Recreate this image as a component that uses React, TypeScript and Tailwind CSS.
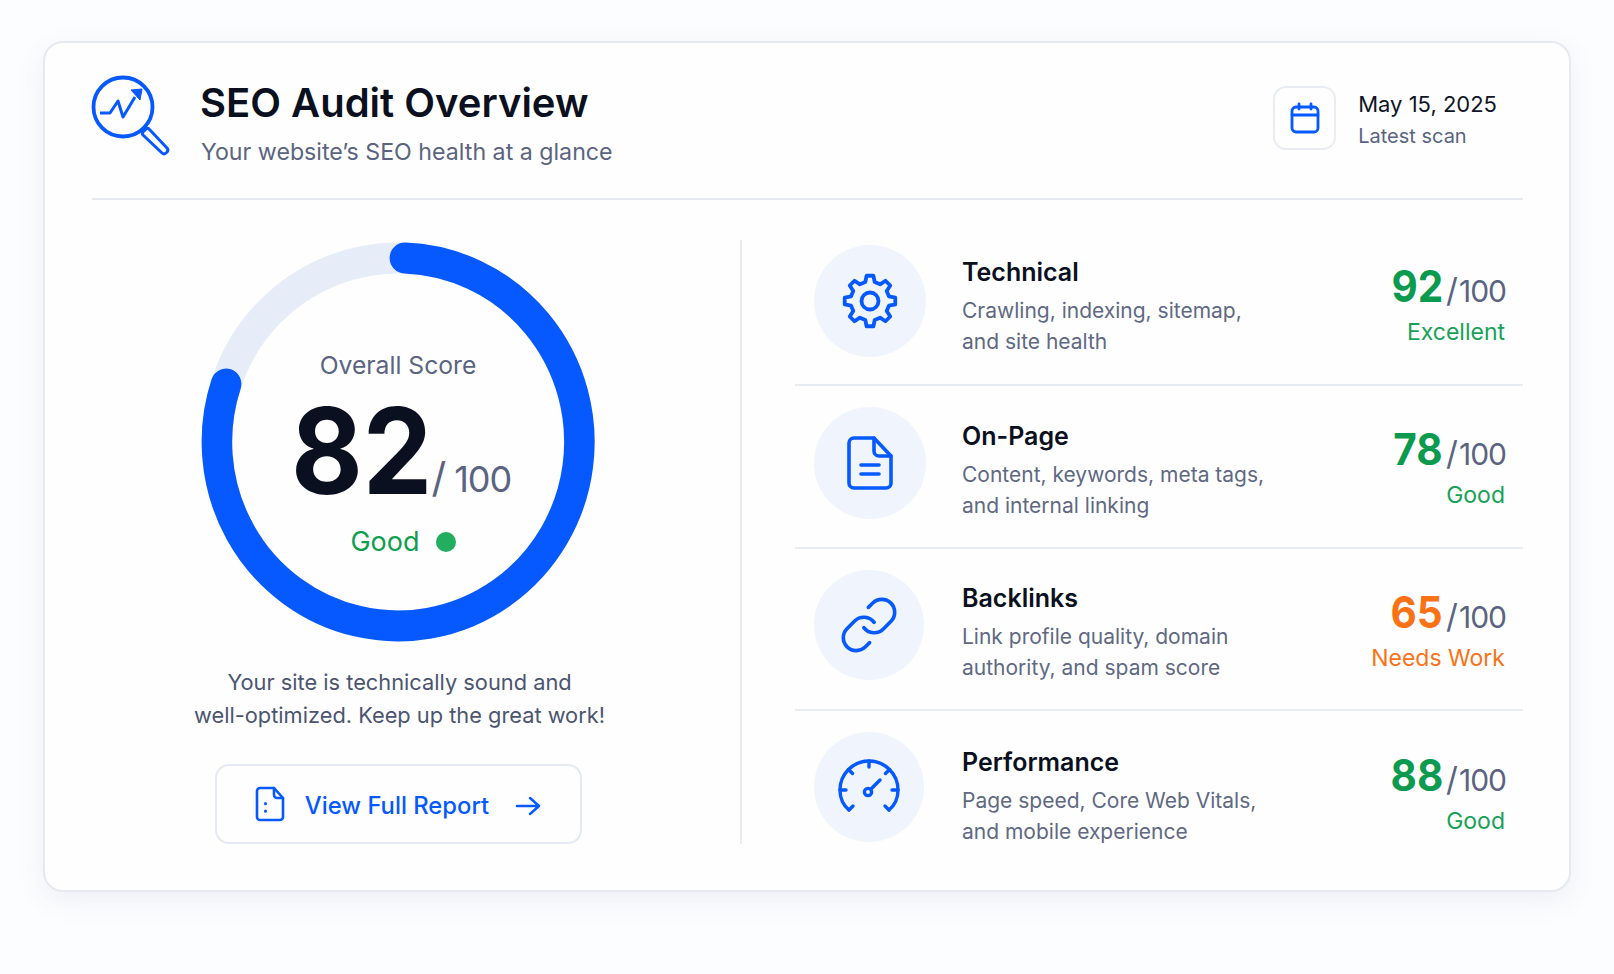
import type { ReactNode } from "react";

const BLUE = "#0559ff";

function gearPath() {
  // 8 teeth around (32,32)
  const teeth = 8;
  const pts: string[] = [];
  for (let i = 0; i < teeth; i++) {
    const a = (i / teeth) * Math.PI * 2 - Math.PI / 2;
    const step = Math.PI / teeth;
    const p = (r: number, t: number) =>
      `${(32 + r * Math.cos(t)).toFixed(2)} ${(32 + r * Math.sin(t)).toFixed(2)}`;
    pts.push(p(19.5, a - step * 0.62), p(25.5, a - step * 0.34), p(25.5, a + step * 0.34), p(19.5, a + step * 0.62));
  }
  return "M" + pts.join("L") + "Z";
}

function GearIcon() {
  return (
    <svg width="64" height="64" viewBox="0 0 64 64" fill="none" stroke={BLUE} strokeWidth="3.8" strokeLinejoin="round">
      <path d={gearPath()} />
      <circle cx="32" cy="32" r="8.5" />
    </svg>
  );
}

function DocIcon() {
  return (
    <svg width="48" height="57" viewBox="0 0 48 57" fill="none" stroke={BLUE} strokeWidth="3.6" strokeLinecap="round" strokeLinejoin="round">
      <path d="M8 3h20l17 18v27a5 5 0 0 1-5 5H8a5 5 0 0 1-5-5V8a5 5 0 0 1 5-5Z" />
      <path d="M28 3v13a5 5 0 0 0 5 5h12" />
      <path d="M15 30h18M15 39h18" />
    </svg>
  );
}

function LinkIcon() {
  return (
    <svg width="62" height="62" viewBox="0 0 24 24" fill="none" stroke={BLUE} strokeWidth="1.4" strokeLinecap="round" strokeLinejoin="round">
      <path d="M10 13a5 5 0 0 0 7.54.54l3-3a5 5 0 0 0-7.07-7.07l-1.72 1.71" />
      <path d="M14 11a5 5 0 0 0-7.54-.54l-3 3a5 5 0 0 0 7.07 7.07l1.71-1.71" />
    </svg>
  );
}

function GaugeIcon() {
  return (
    <svg width="64" height="56" viewBox="0 0 64 56" fill="none" stroke={BLUE} strokeWidth="3.4" strokeLinecap="round" strokeLinejoin="round">
      <path d="M12 51C6 46 3 38 3 31a29 29 0 0 1 58 0c0 7-3 15-9 20" />
      <path d="M12 51l4-4M52 51l-4-4" />
      <path d="M32 2v6M11.5 10.5l4 4M52.500 10.500l-4 4M3 31h6M61 31h-6" />
      <circle cx="31" cy="33" r="3.6" />
      <path d="M34 30l9-9" />
    </svg>
  );
}

function CalendarIcon() {
  return (
    <svg width="30" height="32" viewBox="0 0 30 32" fill="none" stroke={BLUE} strokeWidth="2.8" strokeLinecap="round" strokeLinejoin="round">
      <rect x="2" y="5" width="26" height="25" rx="4" />
      <path d="M2 13h26M9 2v5M21 2v5" />
    </svg>
  );
}

function ReportIcon() {
  return (
    <svg width="30" height="36" viewBox="0 0 30 36" fill="none" stroke={BLUE} strokeWidth="2.6" strokeLinecap="round" strokeLinejoin="round">
      <path d="M5 2h14l9 10v19a3 3 0 0 1-3 3H5a3 3 0 0 1-3-3V5a3 3 0 0 1 3-3Z" />
      <path d="M19 2v7a3 3 0 0 0 3 3h6" />
      <path d="M10.500 17.500v.2M10.500 25v.2" strokeWidth="3" />
    </svg>
  );
}

function ArrowIcon() {
  return (
    <svg width="26" height="22" viewBox="0 0 26 22" fill="none" stroke={BLUE} strokeWidth="2.5" strokeLinecap="round" strokeLinejoin="round">
      <path d="M2 11h22M15 3l9 8-9 8" />
    </svg>
  );
}

function Logo() {
  return (
    <svg width="80" height="82" viewBox="0 0 80 82" fill="none" stroke={BLUE} className="shrink-0">
      <circle cx="32" cy="32" r="29.500" strokeWidth="3.8" />
      <path d="M9 38h10l8-12 5 16 12-20" strokeWidth="3" strokeLinejoin="round" />
      <path d="M40 15l11-1-2 11Z" fill={BLUE} strokeWidth="1" />
      <path d="M52 57l3-3a2 2 0 0 1 3 0l18 19a3 3 0 0 1 0 4l-1 1a3 3 0 0 1-4 0L52 60a2 2 0 0 1 0-3Z" strokeWidth="3" strokeLinejoin="round" />
    </svg>
  );
}

function Ring() {
  return (
    <svg width="394" height="400" viewBox="0 0 400 400" preserveAspectRatio="none" fill="none" className="block">
      <circle cx="200" cy="200" r="184" stroke="#e6edf9" strokeWidth="31" />
      <path d="M207 16A184 184 0 1 1 25.500 142" stroke={BLUE} strokeWidth="31" strokeLinecap="round" />
    </svg>
  );
}

type Row = {
  icon: ReactNode;
  title: string;
  lines: string[];
  score: number;
  label: string;
  tone: string;
  labelTone: string;
  textPad: string;
  scorePad: string;
  small?: boolean;
};

const rows: Row[] = [
  { icon: <GearIcon />, title: "Technical", lines: ["Crawling, indexing, sitemap,", "and site health"], score: 92, label: "Excellent", tone: "text-[#0c9a4e]", labelTone: "text-[#17a257]", textPad: "pt-[10px]", scorePad: "pt-[14px]" },
  { icon: <DocIcon />, title: "On-Page", lines: ["Content, keywords, meta tags,", "and internal linking"], score: 78, label: "Good", tone: "text-[#0c9a4e]", labelTone: "text-[#17a257]", textPad: "pt-[12px]", scorePad: "pt-[15px]" },
  { icon: <LinkIcon />, title: "Backlinks", lines: ["Link profile quality, domain", "authority, and spam score"], score: 65, label: "Needs Work", tone: "text-[#f97316]", labelTone: "text-[#f97316]", textPad: "pt-[11px]", scorePad: "pt-[15px]", small: true },
  { icon: <GaugeIcon />, title: "Performance", lines: ["Page speed, Core Web Vitals,", "and mobile experience"], score: 88, label: "Good", tone: "text-[#0c9a4e]", labelTone: "text-[#17a257]", textPad: "pt-[13px]", scorePad: "pt-[16px]", small: true },
];

export default function App() {
  return (
    <div className="min-h-screen bg-[#fcfdfe] pt-[41px] pl-[43px] font-['Inter',sans-serif]">
      <div className="h-[851px] w-[1528px] rounded-[20px] border-2 border-[#e6e9f0] bg-[#fefefe] pr-[46px] pl-[47px] shadow-[0_8px_28px_rgba(60,80,130,0.08)]">
        {/* header */}
        <div className="flex h-[157px] border-b-2 border-[#e6eaf0]">
          <div className="mt-[32px] ml-[-1px]">
            <Logo />
          </div>
          <div className="ml-[29px] mt-[36px]">
            <h1 className="text-[40px] leading-[48px] font-semibold text-[#0b1020]">SEO Audit Overview</h1>
            <p className="mt-[9px] ml-[1px] text-[23.200px] leading-[32px] text-[#5a6480]">Your website’s SEO health at a glance</p>
          </div>
          <div className="ml-auto mt-[43px] mr-[26px] flex">
            <div className="flex h-[64px] w-[63px] items-center justify-center rounded-[13px] border-2 border-[#e9edf3]">
              <CalendarIcon />
            </div>
            <div className="ml-[22px] pt-[2px]">
              <div className="text-[22px] leading-[32px] font-normal text-[#0f1525]">May 15, 2025</div>
              <div className="mt-[1px] text-[20px] leading-[30px] text-[#5a6480]">Latest scan</div>
            </div>
          </div>
        </div>

        {/* body */}
        <div className="flex">
          {/* left */}
          <div className="flex w-[612px] flex-col items-center pt-[42px]">
            <div className="relative">
              <Ring />
              <div className="absolute inset-0 flex flex-col items-center">
                <div className="mt-[105px] text-[24.700px] leading-[36px] text-[#5a6480]">Overall Score</div>
                <div className="mt-[18px] ml-[6px] flex items-baseline">
                  <span className="mr-[-12px] inline-block origin-left scale-x-[0.92] text-[120px] leading-[100px] font-bold text-[#0b1020]">82</span>
                  <span className="ml-[-1px] -translate-y-[2px] text-[41px] leading-[40px] text-[#5a6480]">/</span>
                  <span className="ml-[8px] -translate-y-[2px] text-[36px] leading-[40px] tracking-[-1px] text-[#5a6480]">100</span>
                </div>
                <div className="mt-[23px] ml-[10px] flex items-center gap-[16px]">
                  <span className="text-[27px] leading-[36px] text-[#0f9d50]">Good</span>
                  <span className="size-[20px] rounded-full bg-[#22ad5f]" />
                </div>
              </div>
            </div>
            <p className="mt-[24px] ml-[3px] text-center text-[21.800px] leading-[33px] text-[#4b5570]">
              Your site is technically sound and
              <br />
              well-optimized. Keep up the great work!
            </p>
            <button type="button" className="mt-[32px] flex h-[80px] w-[367px] items-center justify-center rounded-[14px] border-2 border-[#e5e9f1]">
              <ReportIcon />
              <span className="mt-[4px] ml-[20px] text-[23.800px] font-medium text-[#0559ff]">View Full Report</span>
              <span className="mt-[4px] ml-[26px]">
                <ArrowIcon />
              </span>
            </button>
          </div>

          <div className="ml-[36px] mt-[40px] h-[604px] w-[2px] bg-[#e8ebf1]" />

          {/* right */}
          <div className="ml-[53px] flex-1 pt-[24px]">
            {rows.map((r, i) => (
              <div key={r.title} className={`flex h-[162.300px] pt-[21px] pl-[19px] ${i < rows.length - 1 ? "border-b-2 border-[#e8ecf3]" : ""}`}>
                <div className={`flex shrink-0 items-center justify-center rounded-full bg-[#f0f4fc] ${r.small ? "mr-[38px] size-[110px]" : "mr-[36px] size-[112px]"}`}>
                  {r.icon}
                </div>
                <div className={`flex-1 ${r.textPad}`}>
                  <div className="text-[25px] leading-[34px] font-semibold text-[#0b1020]">{r.title}</div>
                  <div className="mt-[6px] text-[21px] leading-[31px] text-[#5f6982]">
                    {r.lines[0]}
                    <br />
                    {r.lines[1]}
                  </div>
                </div>
                <div className={`mr-[17px] text-right ${r.scorePad}`}>
                  <div className="flex items-baseline justify-end">
                    <span className={`mr-[-4px] inline-block origin-right scale-x-[0.92] text-[44px] leading-[54px] font-bold ${r.tone}`}>{r.score}</span>
                    <span className="ml-[7px] text-[33px] leading-[40px] text-[#5a6480]">/</span>
                    <span className="ml-[1px] text-[30px] leading-[40px] tracking-[-1px] text-[#5a6480]">100</span>
                  </div>
                  <div className={`mt-[2px] mr-[1px] text-[23px] leading-[34px] ${r.labelTone}`}>{r.label}</div>
                </div>
              </div>
            ))}
          </div>
        </div>
      </div>
    </div>
  );
}
